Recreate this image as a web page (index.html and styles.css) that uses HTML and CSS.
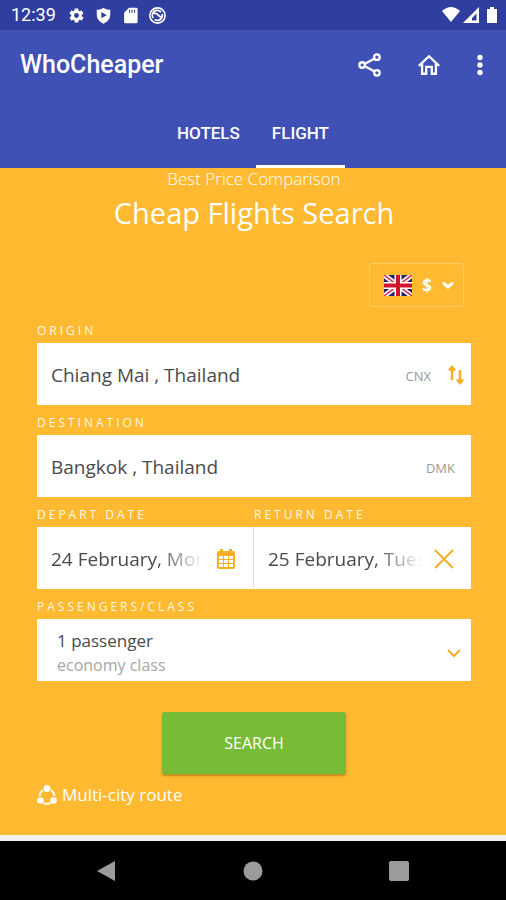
FILE: index.html
```html
<!DOCTYPE html>
<html lang="en">
<head>
<meta charset="utf-8">
<meta name="viewport" content="width=device-width, initial-scale=1">
<title>WhoCheaper</title>
<link rel="stylesheet" href="styles.css">
</head>
<body>
<div class="status-bar">
  <span class="clock">12:39</span>
  <svg class="status-icon" viewBox="0 0 24 24"><path fill-rule="evenodd" d="M19.4 13a7.800 7.800 0 0 0 0-2l2.100-1.600c.2-.2.3-.4.1-.7l-2-3.400c-.1-.2-.4-.3-.6-.2l-2.500 1a7.300 7.300 0 0 0-1.700-1l-.4-2.600a.5.5 0 0 0-.5-.5h-4a.5.5 0 0 0-.5.500L9.100 5.100a7.300 7.300 0 0 0-1.700 1l-2.500-1c-.2-.1-.5 0-.6.2l-2 3.400c-.1.2-.1.500.1.700L4.600 11a7.800 7.800 0 0 0 0 2l-2.100 1.600c-.2.2-.3.400-.1.700l2 3.400c.1.2.4.3.6.2l2.500-1 1.700 1 .4 2.600c0 .3.200.5.500.5h4c.2 0 .5-.2.500-.5l.4-2.600 1.700-1 2.500 1c.2.1.5 0 .6-.2l2-3.400c.1-.2.1-.5-.1-.7zM12 15.500a3.500 3.500 0 1 1 0-7 3.500 3.500 0 0 1 0 7z"/></svg>
  <svg class="status-icon" viewBox="0 0 24 24"><path fill-rule="evenodd" d="M12 1c3 2 6 3 9.500 3v7c0 6-4 10-9.500 12.500C6.500 21 2.500 17 2.500 11V4C6 4 9 3 12 1zM9 7v9l7.500-4.500z"/></svg>
  <svg class="status-icon" viewBox="0 0 24 24"><path fill-rule="evenodd" d="M10 1h10a2 2 0 0 1 2 2v18a2 2 0 0 1-2 2H5a2 2 0 0 1-2-2V8zM10 4v4h1.500V4zm3.500 0v4H15V4zm3.500 0v4h1.500V4z"/></svg>
  <svg class="status-icon stroked" viewBox="0 0 24 24"><circle cx="12" cy="12" r="10.800" stroke-width="2.200"/><path d="M6 15.500A6.800 6.800 0 0 1 17 7.500M18.500 10A6.800 6.800 0 0 1 8 17.500M6.500 9.500c3-1 5 0 6.500 2s3 3 5 3" stroke-width="2.500"/></svg>
  <span class="spacer"></span>
  <span class="signals">
    <svg class="status-icon" viewBox="0 0 18 18"><path d="M0 5Q9-3 18 5L9 16z"/></svg>
    <svg class="status-icon" viewBox="0 0 18 18"><path fill-rule="evenodd" d="M17 1v16H1zM14.500 7.500 10 12v2.500h4.500z"/></svg>
    <svg class="status-icon battery" viewBox="0 0 12 18"><path d="M4 1h4v2h3v14H1V3h3z"/></svg>
  </span>
</div>

<header class="app-bar">
  <div class="toolbar">
    <h1 class="brand">WhoCheaper</h1>
    <button class="icon-button" aria-label="Share"><svg viewBox="0 0 26 26"><path d="M18 6 7 12M7 14l11 6"/><circle cx="20.500" cy="4.500" r="3"/><circle cx="4.500" cy="13" r="3"/><circle cx="20.500" cy="21.500" r="3"/></svg></button>
    <button class="icon-button" aria-label="Home"><svg viewBox="0 0 26 26"><path d="M2 14 13 3.500 24 14M5.500 11.500V22.500h4.500v-7.500h6v7.500h4.500V11.500"/></svg></button>
    <button class="icon-button more" aria-label="More options"><svg viewBox="0 0 8 24"><circle cx="4" cy="4.500" r="2.700"/><circle cx="4" cy="12" r="2.700"/><circle cx="4" cy="19.500" r="2.700"/></svg></button>
  </div>
  <nav class="tabs">
    <a class="tab" href="#hotels">HOTELS</a>
    <a class="tab active" href="#flight" aria-current="page">FLIGHT</a>
  </nav>
</header>

<main class="page">
  <p class="tagline">Best Price Comparison</p>
  <h2 class="title">Cheap Flights Search</h2>

  <form class="search">
    <button type="button" class="currency" aria-label="Language and currency">
      <svg class="flag" viewBox="0 0 28 21">
        <path fill="#24206c" d="M0 0h28v21H0z"/>
        <path stroke="#fff" stroke-width="5" d="m0 0 28 21M28 0 0 21"/>
        <path stroke="#d52b43" stroke-width="1.500" d="m0 0 28 21M28 0 0 21"/>
        <path stroke="#fff" stroke-width="7" d="M14 0v21M0 10.500h28"/>
        <path stroke="#d0142c" stroke-width="4" d="M14 0v21M0 10.500h28"/>
      </svg>
      <span>$</span>
      <svg class="caret" viewBox="0 0 12 8"><path d="m2 2.500 4 3.500 4-3.500"/></svg>
    </button>

    <div class="field">
      <label for="origin">ORIGIN</label>
      <div class="box">
        <input id="origin" type="text" value="Chiang Mai , Thailand">
        <span class="code">CNX</span>
        <button type="button" class="box-action swap" aria-label="Swap origin and destination"><svg viewBox="0 0 18 20"><path d="M5 15V3M2 5.500 5 2l3 3.500M13 5v12M10 14.500l3 3.500 3-3.500"/></svg></button>
      </div>
    </div>

    <div class="field">
      <label for="destination">DESTINATION</label>
      <div class="box">
        <input id="destination" type="text" value="Bangkok , Thailand">
        <span class="code">DMK</span>
      </div>
    </div>

    <div class="dates">
      <div class="field">
        <label for="depart">DEPART DATE</label>
        <div class="box">
          <input id="depart" class="fade" type="text" value="24 February, Monday">
          <button type="button" class="box-action" aria-label="Open calendar"><svg viewBox="0 0 20 22"><rect x="2" y="4" width="16" height="16" rx="1"/><path d="M1 6.500h18M5.500 1v5M14.500 1v5" stroke-width="3"/><path d="M7.500 8v11M12.500 8v11M3 11.500h14M3 15.500h14" stroke-width="1"/></svg></button>
        </div>
      </div>
      <div class="field">
        <label for="return">RETURN DATE</label>
        <div class="box">
          <input id="return" class="fade" type="text" value="25 February, Tuesday">
          <button type="button" class="box-action" aria-label="Clear return date"><svg viewBox="0 0 20 22"><path d="m1 2 18 18M19 2 1 20"/></svg></button>
        </div>
      </div>
    </div>

    <div class="field">
      <label for="passengers">PASSENGERS/CLASS</label>
      <button type="button" id="passengers" class="box passengers">
        <span class="summary"><span>1 passenger</span><span class="cabin">economy class</span></span>
        <svg class="chevron" viewBox="0 0 14 9"><path d="m1 1 6 6 6-6"/></svg>
      </button>
    </div>

    <button type="submit" class="submit">SEARCH</button>
  </form>

  <a class="multi" href="#multi-city">
    <svg viewBox="0 0 20 20"><circle class="ring" cx="10" cy="11.500" r="7.500"/><circle class="gap" cx="10" cy="3.500" r="4.500"/><circle class="gap" cx="3" cy="15.500" r="4.500"/><circle class="gap" cx="17" cy="15.500" r="4.500"/><circle cx="10" cy="3.500" r="3.500"/><circle cx="3.500" cy="15.500" r="3.300"/><circle cx="16.500" cy="15.500" r="3.300"/></svg>
    Multi-city route
  </a>
</main>

<footer class="system-nav">
  <button aria-label="Back"><svg viewBox="0 0 20 22"><path d="M18 1v20L0 11z"/></svg></button>
  <button aria-label="Home screen"><svg viewBox="0 0 20 22"><circle cx="10" cy="11" r="9.500"/></svg></button>
  <button aria-label="Recent apps"><svg viewBox="0 0 20 22"><rect x="0" y="1" width="20" height="20" rx="2"/></svg></button>
</footer>
</body>
</html>
```
FILE: styles.css
```css
* { box-sizing: border-box; }

body {
  margin: 0;
  min-height: 100vh;
  display: flex;
  flex-direction: column;
  background: #f1f1f1;
  color: #fff;
  font-family: "Open Sans", "Noto Sans", sans-serif;
}

button {
  margin: 0;
  padding: 0;
  border: 0;
  background: none;
  color: inherit;
  font: inherit;
  cursor: pointer;
}

a { color: inherit; text-decoration: none; }
svg { display: block; fill: none; }

.status-bar {
  display: flex;
  align-items: center;
  gap: 10px;
  height: 30px;
  padding: 0 8px 0 11px;
  background: #303f9f;
  font-family: Roboto, sans-serif;
}
.clock { margin-right: 2px; font-size: 18px; line-height: 30px; }
.status-icon { width: 17px; height: 17px; fill: #fff; }
.status-icon.stroked { fill: none; stroke: #fff; }
.spacer { flex: 1; }
.signals { display: flex; gap: 2px; }
.signals .status-icon { width: 18px; height: 18px; }
.signals .battery { width: 12px; margin-left: 4px; }

.app-bar { background: #3f51b5; font-family: Roboto, sans-serif; }
.toolbar {
  display: flex;
  align-items: center;
  height: 70px;
  padding: 0 22px 0 20px;
}
.brand { flex: 1; margin: 0; font-size: 25px; font-weight: 500; line-height: 32px; }
.icon-button { margin-left: 35px; }
.icon-button svg { width: 24px; height: 24px; stroke: #fff; stroke-width: 2.500; }
.icon-button.more svg { width: 8px; fill: #fff; stroke: none; }

.tabs { display: flex; justify-content: center; }
.tab {
  padding: 2px 16px 0;
  border-bottom: 3px solid transparent;
  font-size: 17px;
  font-weight: 500;
  line-height: 63px;
}
.tab.active { border-color: #fff; }

.page {
  flex: 1;
  padding: 0 35px 0 37px;
  background: #ffba31;
  border-bottom: 6px solid #f1f1f1;
}
.tagline {
  margin: 0;
  font-size: 17px;
  font-weight: 300;
  line-height: 22px;
  text-align: center;
}
.title {
  margin: 0;
  font-size: 29px;
  font-weight: 400;
  line-height: 46px;
  text-align: center;
}

.search { display: flex; flex-direction: column; padding-top: 27px; }
.currency {
  display: flex;
  align-items: center;
  align-self: flex-end;
  gap: 10px;
  height: 44px;
  margin: 0 7px 6px 0;
  padding: 0 9px 0 14px;
  border: 1px solid #ffcb62;
  border-radius: 3px;
  font-size: 17px;
  font-weight: 700;
}
.flag { width: 28px; height: 21px; }
.caret { width: 12px; height: 8px; stroke: #fff; stroke-width: 3; stroke-linecap: round; }

.field { display: flex; flex-direction: column; min-width: 0; }
.field label {
  padding: 8px 0 2px;
  font-size: 12px;
  letter-spacing: 3px;
  line-height: 20px;
  color: #fff6e4;
}
.box {
  display: flex;
  align-items: center;
  height: 62px;
  padding-left: 14px;
  background: #fff;
  color: #4a4a4a;
}
.box input {
  flex: 1;
  min-width: 0;
  height: 100%;
  padding: 2px 0 0;
  border: 0;
  outline: 0;
  background: none;
  color: inherit;
  font: inherit;
  font-size: 19px;
}
.fade { mask-image: linear-gradient(to right, #000 70%, transparent); }
.code { margin-right: 16px; padding-top: 4px; font-size: 13px; color: #999; }
.box-action { padding: 2px 17px 0 12px; }
.box-action svg { width: 20px; height: 22px; stroke: #f9ae29; stroke-width: 2; }
.swap { padding: 2px 6px 0 0; }
.swap svg { width: 18px; height: 20px; stroke-width: 2.500; }

.dates { display: grid; grid-template-columns: 1fr 1fr; }
.dates .field:first-child .box { border-right: 1px solid #e0e0e0; }

.passengers { padding: 6px 10px 0 20px; text-align: left; }
.summary { display: flex; flex: 1; flex-direction: column; font-size: 17px; line-height: 24px; }
.cabin { font-size: 16px; color: #a6a6a6; }
.chevron { width: 14px; height: 9px; stroke: #f9ae29; stroke-width: 2; }

.submit {
  align-self: center;
  width: 184px;
  height: 62px;
  margin: 31px 0 9px;
  border-radius: 3px;
  background: #78bb37;
  box-shadow: 0 2px 2px rgba(100, 70, 0, .4);
  font-size: 16px;
}
.multi { display: inline-flex; align-items: center; gap: 5px; font-size: 17px; line-height: 24px; }
.multi svg { width: 20px; height: 20px; fill: #fff; }
.multi .ring { fill: none; stroke: #fff; stroke-width: 2; }
.multi .gap { fill: #ffba31; }

.system-nav {
  display: flex;
  align-items: center;
  justify-content: center;
  gap: 126px;
  height: 59px;
  background: #000;
}
.system-nav svg { width: 20px; height: 22px; fill: #9b9b9b; }
```
